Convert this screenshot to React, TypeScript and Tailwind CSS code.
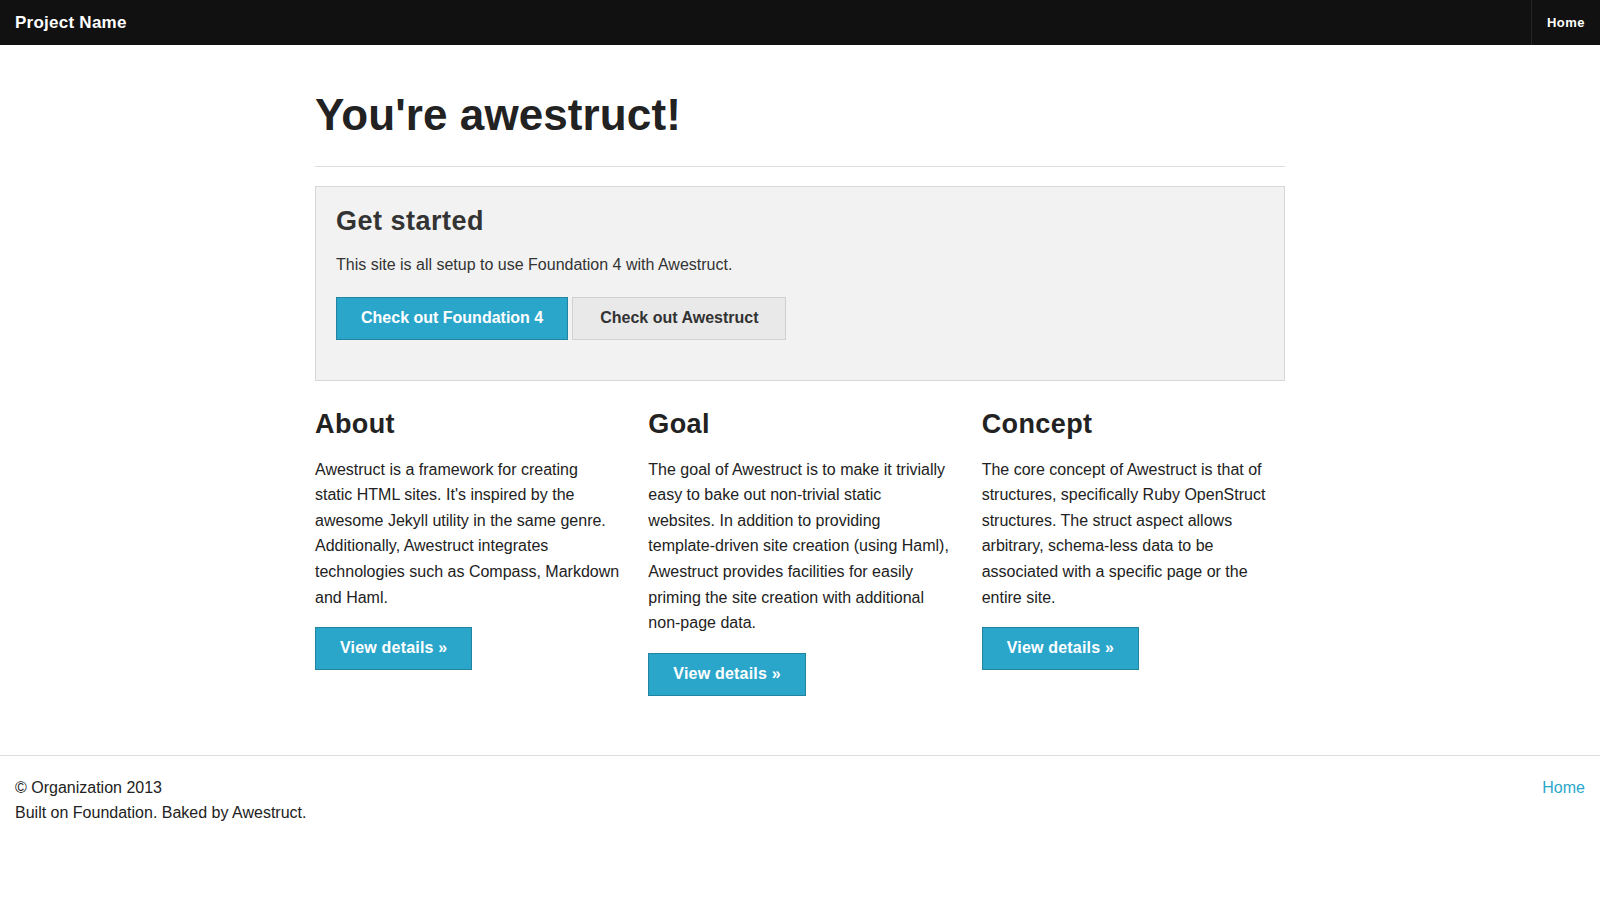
const COLUMNS = [
  {
    title: "About",
    lines: [
      "Awestruct is a framework for creating",
      "static HTML sites. It's inspired by the",
      "awesome Jekyll utility in the same genre.",
      "Additionally, Awestruct integrates",
      "technologies such as Compass, Markdown",
      "and Haml.",
    ],
  },
  {
    title: "Goal",
    lines: [
      "The goal of Awestruct is to make it trivially",
      "easy to bake out non-trivial static",
      "websites. In addition to providing",
      "template-driven site creation (using Haml),",
      "Awestruct provides facilities for easily",
      "priming the site creation with additional",
      "non-page data.",
    ],
  },
  {
    title: "Concept",
    lines: [
      "The core concept of Awestruct is that of",
      "structures, specifically Ruby OpenStruct",
      "structures. The struct aspect allows",
      "arbitrary, schema-less data to be",
      "associated with a specific page or the",
      "entire site.",
    ],
  },
];

function Button({ children, className = "" }: { children: React.ReactNode; className?: string }) {
  return (
    <a
      href="#"
      className={`inline-block border pt-[12px] pb-[13px] text-[16px] leading-4 font-bold ${className}`}
    >
      {children}
    </a>
  );
}

const PRIMARY = "border-[#2284a1] bg-[#2ba6cb] text-white";

export default function App() {
  return (
    <div className="min-h-screen bg-white font-['Liberation_Sans',Arial,sans-serif] text-[16px] text-[#222]">
      <nav className="flex h-[45px] items-stretch justify-between bg-[#111]">
        <a href="#" className="pl-[15px] text-[17px] leading-[45px] font-bold tracking-[0.25px] text-white">
          Project Name
        </a>
        <a
          href="#"
          className="border-l border-[#262626] px-[15px] text-[13px] leading-[45px] font-bold tracking-[0.5px] text-white"
        >
          Home
        </a>
      </nav>

      <main className="mx-auto max-w-[1000px]">
        <div className="px-[15px]">
          <h1 className="mt-[42px] text-[44px] leading-[55px] font-bold tracking-[0.1px]">You're awestruct!</h1>
          <hr className="mt-[24px] mb-[19px] border-t border-[#ddd]" />

          <div className="mb-5 border border-[#d8d8d8] bg-[#f2f2f2] p-5 text-[#333]">
            <h3 className="mt-[-3px] mb-[14px] text-[27px] leading-[34px] font-bold tracking-[0.5px]">Get started</h3>
            <p className="mb-[19px] leading-[25.6px]">This site is all setup to use Foundation 4 with Awestruct.</p>
            <div className="mb-5 flex gap-[4px]">
              <Button className={`px-6 ${PRIMARY}`}>Check out Foundation 4</Button>
              <Button className="border-[#d0d0d0] bg-[#e9e9e9] px-[27px] text-[#333]">Check out Awestruct</Button>
            </div>
          </div>
        </div>

        <div className="grid grid-cols-3">
          {COLUMNS.map((col) => (
            <div key={col.title} className="px-[15px]">
              <h3 className="mt-[6px] mb-[16px] text-[27px] leading-[34px] font-bold tracking-[0.4px]">{col.title}</h3>
              <p className="mb-[17px] leading-[25.6px]">
                {col.lines.map((line) => (
                  <span key={line} className="block whitespace-nowrap">
                    {line}
                  </span>
                ))}
              </p>
              <Button className={`px-6 tracking-[0.2px] ${PRIMARY}`}>View details »</Button>
            </div>
          ))}
        </div>
      </main>

      <footer className="mt-[59px]">
        <hr className="mb-[19px] border-t border-[#ddd]" />
        <div className="flex justify-between px-[15px]">
          <p className="leading-[25.6px]">
            © Organization 2013
            <br />
            Built on Foundation. Baked by Awestruct.
          </p>
          <a href="#" className="leading-[25.6px] text-[#2ba6cb]">
            Home
          </a>
        </div>
      </footer>
    </div>
  );
}
